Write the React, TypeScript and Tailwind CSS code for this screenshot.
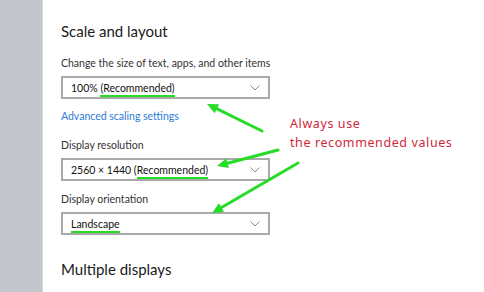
import React from "react";

const font = { fontFamily: 'Lato, "Noto Sans", sans-serif' };
const red = { fontFamily: '"Noto Sans", sans-serif' };

function Chevron() {
  return (
    <svg width="10" height="6" viewBox="0 0 10 6" className="shrink-0">
      <path d="M0.5 0.5 L5 5 L9.5 0.5" fill="none" stroke="#8a8a8a" strokeWidth="1" />
    </svg>
  );
}

function Dropdown({ children }: { children: React.ReactNode }) {
  return (
    <div className="w-[209px] h-[23px] border-2 border-[#a9a9a9] flex items-center justify-between pl-[8px] pr-[8px] text-[10.5px] text-[#111]">
      <div className="leading-[14px]">{children}</div>
      <Chevron />
    </div>
  );
}

function Mark({ children }: { children: React.ReactNode }) {
  return <span className="border-b-2 border-[#27dc27] pb-[1px]">{children}</span>;
}

function Arrow({ x1, y1, x2, y2 }: { x1: number; y1: number; x2: number; y2: number }) {
  const dx = x2 - x1;
  const dy = y2 - y1;
  const len = Math.hypot(dx, dy);
  const ux = dx / len;
  const uy = dy / len;
  const hl = 11;
  const hw = 5;
  const bx = x2 - ux * hl;
  const by = y2 - uy * hl;
  const p1 = `${x2},${y2}`;
  const p2 = `${bx - uy * hw},${by + ux * hw}`;
  const p3 = `${bx + uy * hw},${by - ux * hw}`;
  return (
    <g>
      <line x1={x1} y1={y1} x2={bx + ux * 2} y2={by + uy * 2} stroke="#27dc27" strokeWidth="3" strokeLinecap="round" />
      <polygon points={`${p1} ${p2} ${p3}`} fill="#27dc27" />
    </g>
  );
}

export default function App() {
  return (
    <div className="w-[484px] h-[292px] flex bg-white overflow-hidden relative" style={font}>
      <div className="w-[43px] h-full bg-[#c3c6cc] border-r border-[#d6d8dc]" />
      <div className="flex-1 flex flex-col pl-[18px] pt-[21px] text-[#2b2b2b]">
        <div className="text-[15px] leading-[20px] text-[#1a1a1a]">Scale and layout</div>
        <div className="mt-[15px] text-[10.5px] leading-[14px] text-[#333]">Change the size of text, apps, and other items</div>
        <div className="mt-[6px]">
          <Dropdown>
            100% <Mark>(Recommended)</Mark>
          </Dropdown>
        </div>
        <div className="mt-[10px] text-[10.5px] leading-[14px] text-[#2b7cd3]">Advanced scaling settings</div>
        <div className="mt-[15px] text-[10.5px] leading-[14px] text-[#333]">Display resolution</div>
        <div className="mt-[6px]">
          <Dropdown>
            2560 × 1440 (<Mark>Recommended)</Mark>
          </Dropdown>
        </div>
        <div className="mt-[11px] text-[10.5px] leading-[14px] text-[#333]">Display orientation</div>
        <div className="mt-[6px]">
          <Dropdown>
            <Mark>Landscape</Mark>
          </Dropdown>
        </div>
        <div className="mt-[24px] text-[15px] leading-[20px] text-[#1a1a1a]">Multiple displays</div>
      </div>
      <div className="absolute left-[290px] top-[114px] text-[12.5px] leading-[19px] text-[#d0283a] tracking-[0.6px]" style={red}>
        <div>Always use</div>
        <div>the recommended values</div>
      </div>
      <svg className="absolute inset-0 pointer-events-none" width="484" height="292">
        <Arrow x1={262} y1={131} x2={207} y2={104} />
        <Arrow x1={278} y1={150} x2={217} y2={166} />
        <Arrow x1={298} y1={163} x2={212} y2={213} />
      </svg>
    </div>
  );
}
